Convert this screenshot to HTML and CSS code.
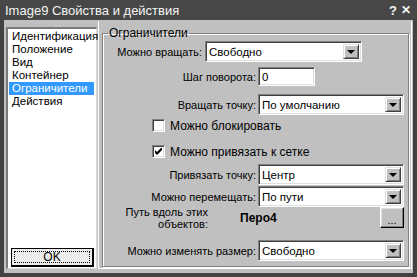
FILE: index.html
```html
<!DOCTYPE html>
<html>
<head>
<meta charset="utf-8">
<link rel="stylesheet" href="styles.css">
</head>
<body>
<div class="window">
  <div class="titlebar">
    <span class="title">Image9 Свойства и действия</span>
    <span class="tbtn">?</span>
    <span class="tbtn close">✕</span>
  </div>
  <div class="client">
    <div class="leftpane">
      <ul class="list">
        <li>Идентификация</li>
        <li>Положение</li>
        <li>Вид</li>
        <li>Контейнер</li>
        <li class="sel">Ограничители</li>
        <li>Действия</li>
      </ul>
      <button class="okbtn"><span class="focus">OK</span></button>
    </div>
    <div class="rightpane">
      <fieldset class="group">
        <legend>Ограничители</legend>
        <div class="row r1">
          <span class="lbl lbl-a">Можно вращать:</span>
          <div class="select sel-a"><span class="val">Свободно</span><span class="arrow"></span></div>
        </div>
        <div class="row r2">
          <span class="lbl lbl-b">Шаг поворота:</span>
          <div class="input"><span class="val">0</span></div>
        </div>
        <div class="row r3">
          <span class="lbl lbl-b">Вращать точку:</span>
          <div class="select sel-b"><span class="val">По умолчанию</span><span class="arrow"></span></div>
        </div>
        <div class="row r4">
          <span class="check"></span>
          <span class="ctext">Можно блокировать</span>
        </div>
        <div class="row r5">
          <span class="check checked"><svg width="7" height="7" viewBox="0 0 7 7"><path d="M0 2v3l2 2 5-5V-1L2 4z" fill="#000"/></svg></span>
          <span class="ctext">Можно привязать к сетке</span>
        </div>
        <div class="row r6">
          <span class="lbl lbl-b">Привязать точку:</span>
          <div class="select sel-b"><span class="val">Центр</span><span class="arrow"></span></div>
        </div>
        <div class="row r7">
          <span class="lbl lbl-b">Можно перемещать:</span>
          <div class="select sel-b"><span class="val">По пути</span><span class="arrow"></span></div>
        </div>
        <div class="row r8">
          <span class="lbl lbl-c">Путь вдоль этих объектов:</span>
          <span class="pero">Перо4</span>
          <button class="dots">...</button>
        </div>
        <div class="row r9">
          <span class="lbl lbl-b">Можно изменять размер:</span>
          <div class="select sel-b"><span class="val">Свободно</span><span class="arrow"></span></div>
        </div>
      </fieldset>
    </div>
  </div>
</div>
</body>
</html>
```
FILE: styles.css
```css
* { box-sizing: border-box; }
html, body { margin: 0; padding: 0; background: #424242; }
body { font-family: "Liberation Sans", Arial, sans-serif; font-size: 11px; color: #000; }

.window {
  width: 417px; height: 277px;
  background: #424242;
  display: flex; flex-direction: column;
}
.titlebar {
  height: 20px; flex: none;
  display: flex; align-items: center;
  padding: 0 6px 0 5px;
  color: #f4f4f4; font-size: 13px;
  background: #474747;
}
.title { flex: 1; }
.tbtn { font-weight: bold; font-size: 13px; margin-left: 4px; }
.close { font-size: 12px; }

.client {
  flex: 1;
  margin: 0 4px 4px 4px;
  background: #c0c0c0;
  display: flex;
  padding: 1px 1px 4px 2px;
}

.leftpane {
  width: 91px; margin-top: 6px;
  background: #fff;
  border-top: 2px solid #7a7a7a; border-left: 2px solid #7a7a7a;
  border-right: 1px solid #dcdcdc; border-bottom: 1px solid #dcdcdc;
  display: flex; flex-direction: column;
  padding: 1px 2px 1px 1px;
}
.list { list-style: none; margin: 0; padding: 0; flex: 1; font-size: 11.5px; }
.list li { height: 13px; line-height: 13px; padding-left: 3px; white-space: nowrap; }
.list li.sel { background: #3399ff; color: #fff; }

.okbtn {
  height: 19px; margin: 0 0 0 2px; width: 83px;
  background: #ececec; font: inherit; font-size: 12px;
  border: 1px solid #000; border-bottom-width: 2px; border-right-width: 2px;
  padding: 2px; display: flex;
}
.okbtn .focus {
  flex: 1; border: 1px dotted #000; line-height: 11px; text-align: center;
}

.rightpane {
  flex: 1; margin-left: 1px;
  border-left: 1px solid #fff;
  border-right: 1px solid #fff;
  border-bottom: 1px solid #fff;
  padding: 6px 2px 1px 3px;
  display: flex;
}
.group {
  flex: 1; margin: 0; padding: 0;
  border: 1px solid #808080;
  box-shadow: 1px 1px 0 #fff, inset 1px 1px 0 #fff;
  display: flex; flex-direction: column;
}
.group legend {
  padding: 0 1px; margin-left: 5px; font-size: 12px; line-height: 12px;
}

.row { display: flex; align-items: center; }
.lbl { text-align: right; white-space: nowrap; flex: none; }
.lbl-a { width: 99px; margin-right: 3px; }
.lbl-b { width: 153px; margin-right: 2px; }
.lbl-c { width: 86px; margin-left: 19px; white-space: normal; line-height: 12px; }

.select, .input {
  height: 21px; background: #fff;
  border-top: 1px solid #808080; border-left: 1px solid #808080;
  border-right: 1px solid #fff; border-bottom: 1px solid #fff;
  box-shadow: inset 1px 1px 0 #404040, inset -1px -1px 0 #dfdfdf;
  display: flex; align-items: center; padding: 2px 2px 2px 3px;
  font-size: 11.5px;
}
.val { flex: 1; white-space: nowrap; }
.sel-a { width: 157px; }
.sel-b { width: 146px; }
.input { width: 57px; height: 19px; }
.arrow {
  width: 16px; height: 15px; flex: none;
  background: #c0c0c0;
  border-top: 1px solid #dfdfdf; border-left: 1px solid #dfdfdf;
  border-right: 1px solid #404040; border-bottom: 1px solid #404040;
  box-shadow: inset 1px 1px 0 #fff, inset -1px -1px 0 #808080;
  display: flex; align-items: center; justify-content: center;
}
.arrow::after {
  content: ""; width: 0; height: 0;
  border-left: 4px solid transparent; border-right: 4px solid transparent;
  border-top: 4px solid #000; margin-top: 1px;
}

.r1 { margin-top: 2px; }
.r2 { margin-top: 5px; }
.r3 { margin-top: 8px; }
.r4 { margin-top: 4px; padding-left: 49px; height: 13px; }
.r5 { margin-top: 13px; padding-left: 49px; height: 13px; }
.r6 { margin-top: 6px; }
.r7 { margin-top: 1px; }
.r8 { margin-top: 0px; height: 21px; }
.r9 { margin-top: 12px; }

.check {
  width: 13px; height: 13px; background: #fff; flex: none;
  border-top: 1px solid #808080; border-left: 1px solid #808080;
  border-right: 1px solid #fff; border-bottom: 1px solid #fff;
  box-shadow: inset 1px 1px 0 #404040, inset -1px -1px 0 #dfdfdf;
  display: flex; align-items: center; justify-content: center;
}
.ctext { margin-left: 5px; font-size: 12px; }

.pero { font-weight: bold; font-size: 12px; margin-left: 32px; flex: 1; }
.dots {
  width: 24px; height: 21px; margin-right: 4px;
  background: #c0c0c0; font: inherit; font-size: 11px; padding: 4px 0 0 0;
  border-top: 1px solid #fff; border-left: 1px solid #fff;
  border-right: 1px solid #000; border-bottom: 1px solid #000;
  box-shadow: inset -1px -1px 0 #808080, inset 1px 1px 0 #dfdfdf;
}
```
